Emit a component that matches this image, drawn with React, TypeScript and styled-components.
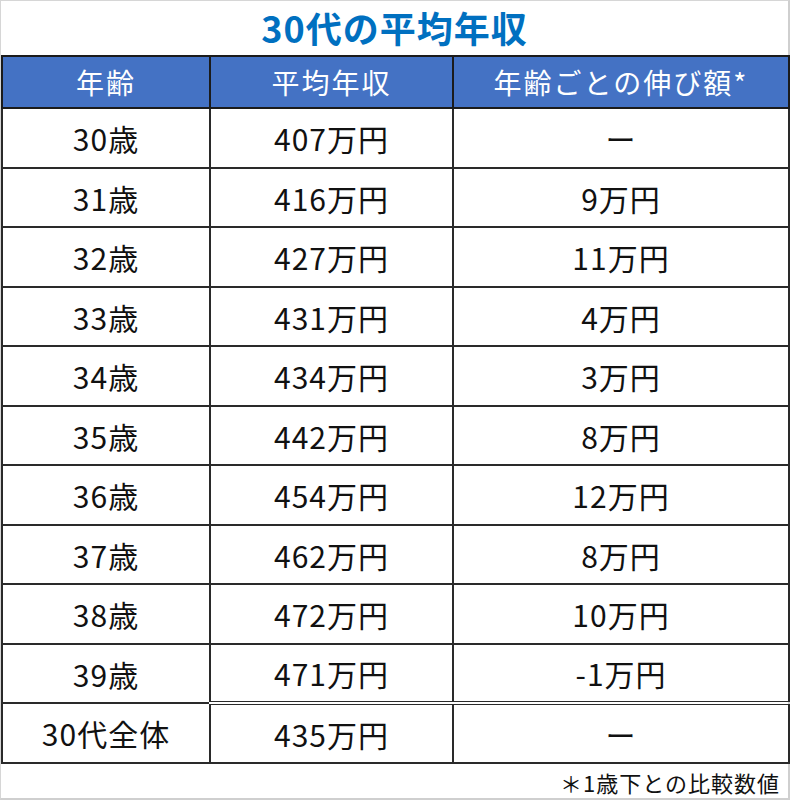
import styled, { createGlobalStyle } from 'styled-components';

const GlobalStyle = createGlobalStyle`
  html, body {
    margin: 0;
    padding: 0;
    background: #fff;
  }
  body {
    font-family: "Noto Sans CJK JP", "Noto Sans", sans-serif;
  }
`;

const Frame = styled.div`
  box-sizing: border-box;
  width: 790px;
  height: 800px;
  background: #fff;
  border: 1px solid #d6d6d6;
  border-right: 2px solid #cfcfcf;
  border-bottom: 2px solid #cfcfcf;
  display: flex;
  flex-direction: column;
`;

const Title = styled.h1`
  flex-shrink: 0;
  margin: 0;
  padding: 0 0 2px;
  text-align: center;
  color: #0070c0;
  font-size: 36px;
  line-height: 52px;
  font-weight: 700;
  letter-spacing: 1px;
`;

const Table = styled.table`
  flex-shrink: 0;
  border-collapse: collapse;
  width: 787px;
  table-layout: fixed;
  color: #111;
`;

const HeadCell = styled.th`
  background: #4472c4;
  color: #fff;
  font-weight: 400;
  font-size: 28px;
  letter-spacing: 2px;
  height: 50px;
  padding: 0;
  border: 2px solid #1b1b1b;
  text-align: center;
`;

const BodyRow = styled.tr`
  height: 59px;
  &:nth-child(odd) {
    height: 60px;
  }
`;

const Cell = styled.td<{ $double?: boolean }>`
  font-size: 30px;
  padding: 0;
  border: 2px solid #2a2a2a;
  border-top: ${(p) => (p.$double ? '4px double #2a2a2a' : '2px solid #2a2a2a')};
  text-align: center;
  letter-spacing: 1px;
`;

const Note = styled.div`
  text-align: right;
  padding: 2px 8px 0 0;
  font-size: 22px;
  letter-spacing: 1px;
  color: #111;
`;

const rows: [string, string, string][] = [
  ['30歳', '407万円', 'ー'],
  ['31歳', '416万円', '9万円'],
  ['32歳', '427万円', '11万円'],
  ['33歳', '431万円', '4万円'],
  ['34歳', '434万円', '3万円'],
  ['35歳', '442万円', '8万円'],
  ['36歳', '454万円', '12万円'],
  ['37歳', '462万円', '8万円'],
  ['38歳', '472万円', '10万円'],
  ['39歳', '471万円', '-1万円'],
];

export default function App() {
  return (
    <>
      <GlobalStyle />
      <Frame>
        <Title>30代の平均年収</Title>
        <Table>
          <colgroup>
            <col style={{ width: 208 }} />
            <col style={{ width: 243 }} />
            <col style={{ width: 336 }} />
          </colgroup>
          <thead>
            <tr>
              <HeadCell>年齢</HeadCell>
              <HeadCell>平均年収</HeadCell>
              <HeadCell>年齢ごとの伸び額*</HeadCell>
            </tr>
          </thead>
          <tbody>
            {rows.map(([age, avg, diff]) => (
              <BodyRow key={age}>
                <Cell>{age}</Cell>
                <Cell>{avg}</Cell>
                <Cell>{diff}</Cell>
              </BodyRow>
            ))}
            <BodyRow>
              <Cell>30代全体</Cell>
              <Cell $double>435万円</Cell>
              <Cell $double>ー</Cell>
            </BodyRow>
          </tbody>
        </Table>
        <Note>＊1歳下との比較数値</Note>
      </Frame>
    </>
  );
}
